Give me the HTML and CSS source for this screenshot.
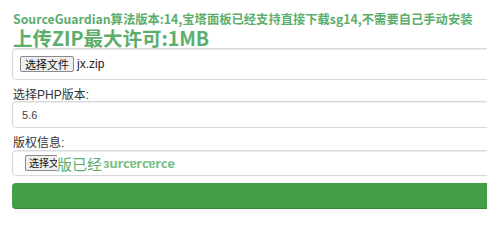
FILE: index.html
```html
<!DOCTYPE html>
<html lang="zh-CN">
<head>
<meta charset="utf-8">
<title>SourceGuardian</title>
<link rel="stylesheet" href="styles.css">
</head>
<body>
<div class="page">
  <h3 class="notice">SourceGuardian算法版本:14,宝塔面板已经支持直接下载sg14,不需要自己手动安装</h3>
  <h2 class="limit">上传ZIP最大许可:1MB</h2>
  <div class="field file-field">
    <span class="file-btn">选择文件</span><span class="file-name">jx.zip</span>
  </div>
  <label class="label">选择PHP版本:</label>
  <div class="field select-field">5.6</div>
  <label class="label">版权信息:</label>
  <div class="field copy-field">
    <span class="file-btn small">选择文</span><span class="ghost-big">版已经</span><span class="ghost">ɜurcɐrcɐrce</span>
  </div>
  <div class="submit"></div>
</div>
</body>
</html>
```

FILE: styles.css
```css
html, body {
  margin: 0;
  padding: 0;
  overflow: hidden;
  background: #ffffff;
}

body {
  font-family: "Noto Sans", "Noto Sans CJK SC", sans-serif;
  color: #333333;
}

.page {
  width: 500px;
  padding-left: 12px;
}

.notice {
  margin: 11px 0 0 1px;
  font-family: "Noto Sans CJK SC", sans-serif;
  font-size: 12.3px;
  line-height: 16px;
  font-weight: 700;
  color: #5cae6c;
  white-space: nowrap;
}

.limit {
  margin: 0 0 0 1px;
  font-family: "Noto Sans CJK SC", sans-serif;
  font-size: 19.5px;
  line-height: 21px;
  font-weight: 700;
  color: #5cae6c;
  white-space: nowrap;
}

.field {
  box-sizing: border-box;
  border: 1px solid #d9d9d9;
  border-radius: 4px;
  box-shadow: inset 0 1px 1px rgba(0, 0, 0, 0.075);
  display: flex;
  align-items: center;
  background: #fff;
}

.file-field {
  height: 32px;
  padding-left: 7px;
}

.file-btn {
  box-sizing: border-box;
  height: 16px;
  padding: 0 4px;
  border: 1px solid #8a8a8a;
  border-radius: 2px;
  background: #efefef;
  font-family: "Noto Sans CJK SC", sans-serif;
  font-size: 11px;
  line-height: 14px;
  color: #111;
}

.file-name {
  margin-left: 3px;
  font-family: "Liberation Sans", "Noto Sans CJK SC", sans-serif;
  font-size: 12px;
  color: #222;
}

.label {
  display: block;
  margin: 8px 0 0 1px;
  font-family: "Liberation Sans", "Noto Sans CJK SC", sans-serif;
  font-size: 12px;
  line-height: 14px;
  color: #333;
}

.select-field {
  height: 27px;
  margin-top: -1px;
  padding-left: 9px;
  font-family: "Liberation Sans", sans-serif;
  font-size: 11px;
  color: #444;
}

.copy-field {
  height: 26px;
  padding-left: 12px;
  overflow: hidden;
}

.file-btn.small {
  border-right: none;
  border-radius: 2px 0 0 2px;
  padding: 0 0 0 3px;
  width: 32px;
  overflow: hidden;
  white-space: nowrap;
  font-size: 10px;
}

.ghost-big {
  font-family: "Noto Sans CJK SC", sans-serif;
  font-size: 15px;
  line-height: 17px;
  color: #5cae6c;
}

.ghost {
  margin-left: 1px;
  font-family: "Open Sans", sans-serif;
  font-size: 13px;
  font-weight: 700;
  color: #7cbf88;
  letter-spacing: -0.3px;
}

.submit {
  height: 26px;
  margin-top: 7px;
  border-radius: 4px;
  background: #449e48;
  border-bottom: 1px solid #3a8a3e;
  box-sizing: border-box;
}
```
